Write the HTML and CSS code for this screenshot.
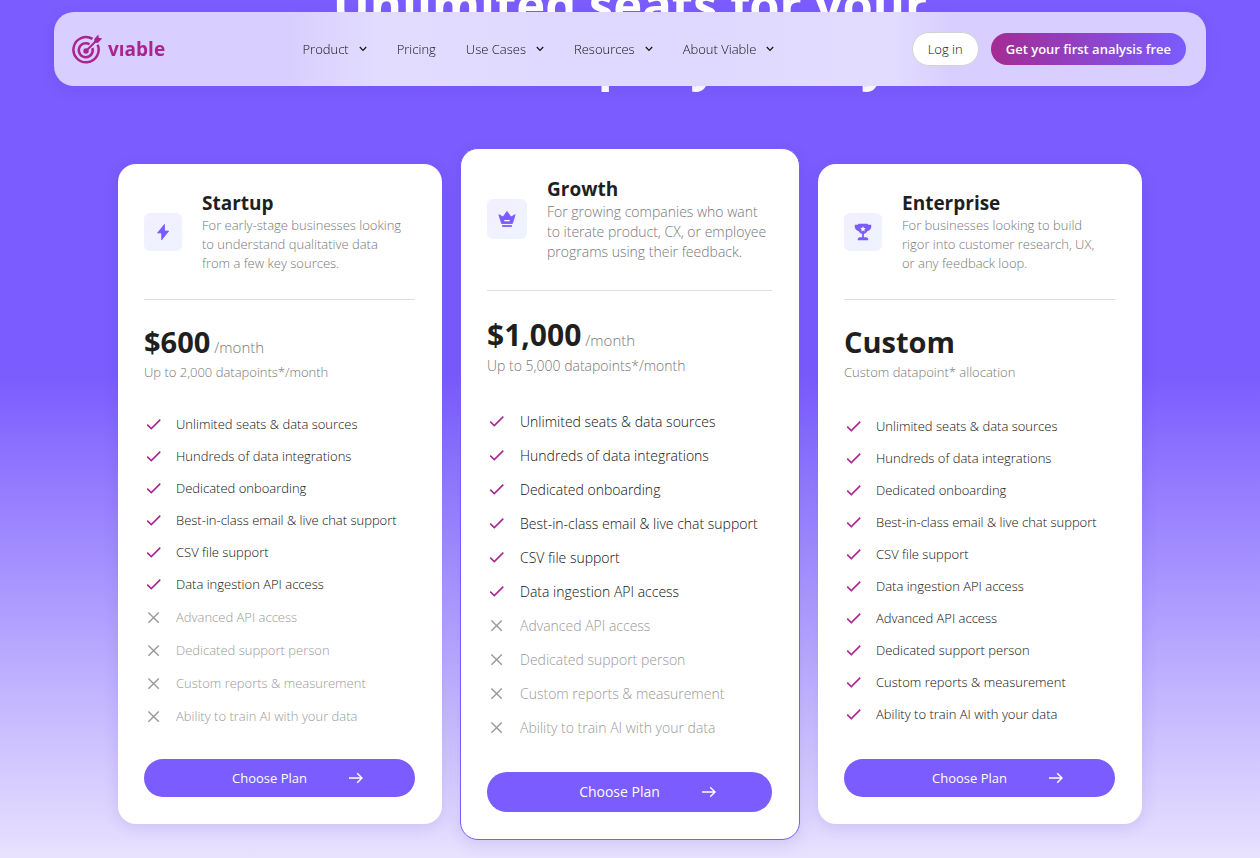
FILE: index.html
```
<!DOCTYPE html>
<html lang="en">

<head>
    <meta charset="UTF-8">
    <meta name="viewport" content="width=device-width, initial-scale=1.0">
    <title>Viable | Pricing</title>
    <link rel="stylesheet" href="styles.css">
</head>

<body>
    <!-- icons shared by the menu and the plans -->
    <svg class="sprite" width="0" height="0" aria-hidden="true">
        <symbol id="chevron" viewBox="0 0 8 6">
            <path d="M.8 1L4 4.400 7.200 1" fill="none" stroke="currentColor" stroke-width="1.2" />
        </symbol>
        <symbol id="check" viewBox="0 0 20 20">
            <path d="M3.2 10.600l4.100 4L16.300 5.600" fill="none" stroke="currentColor" stroke-width="1.5" />
        </symbol>
        <symbol id="cross" viewBox="0 0 20 20">
            <path d="M4.4 5.4l10.4 10.4M14.8 5.4L4.4 15.8" fill="none" stroke="currentColor" stroke-width="1.4" />
        </symbol>
        <symbol id="arrow" viewBox="0 0 14 12">
            <path d="M0 6h13M8.2 1.2L13 6l-4.8 4.8" fill="none" stroke="currentColor" stroke-width="1.4" />
        </symbol>
    </svg>

    <header class="navbar">
        <a class="logo" href="#">
            <svg width="31" height="31" viewBox="0 0 31 31" aria-hidden="true">
                <g fill="none" stroke="currentColor" stroke-width="2.5">
                    <path d="M20.5 4.9A12.6 12.6 0 1 0 25.6 10.7" />
                    <path d="M17.5 10.3A7 7 0 1 0 20.4 14" />
                    <path d="M14 17L24.5 6.5" stroke-width="2" />
                </g>
                <circle cx="14" cy="17" r="2.7" fill="currentColor" />
                <path d="M22.3 8.9V4.9L26.3.6l.5 3.2 3.4.7-4.1 4.2z" fill="currentColor" />
            </svg>
            <span>vıable</span>
        </a>
        <nav class="menu">
            <a href="#">Product <svg class="chevron"><use href="#chevron" /></svg></a>
            <a href="#">Pricing</a>
            <a href="#">Use Cases <svg class="chevron"><use href="#chevron" /></svg></a>
            <a href="#">Resources <svg class="chevron"><use href="#chevron" /></svg></a>
            <a href="#">About Viable <svg class="chevron"><use href="#chevron" /></svg></a>
        </nav>
        <div class="actions">
            <a class="login" href="#">Log in</a>
            <a class="cta" href="#">Get your first analysis free</a>
        </div>
    </header>

    <main class="pricing">
        <h1 class="headline">Unlimited seats for your<br>entire company, always.</h1>

        <div class="plans">
            <section class="plan">
                <div class="plan-head">
                    <div class="plan-icon">
                        <svg viewBox="0 0 20 20" aria-hidden="true">
                            <path d="M11.6 1.6L4 11h4.6v7.6L16.2 9h-4.6z" fill="currentColor" stroke="currentColor" stroke-linejoin="round" />
                        </svg>
                    </div>
                    <div>
                        <h2>Startup</h2>
                        <p>For early-stage businesses looking to understand qualitative data from a few key sources.</p>
                    </div>
                </div>
                <div class="price"><strong>$600</strong> /month</div>
                <p class="volume">Up to 2,000 datapoints*/month</p>
                <ul class="features">
                    <li><svg><use href="#check" /></svg>Unlimited seats &amp; data sources</li>
                    <li><svg><use href="#check" /></svg>Hundreds of data integrations</li>
                    <li><svg><use href="#check" /></svg>Dedicated onboarding</li>
                    <li><svg><use href="#check" /></svg>Best-in-class email &amp; live chat support</li>
                    <li><svg><use href="#check" /></svg>CSV file support</li>
                    <li><svg><use href="#check" /></svg>Data ingestion API access</li>
                    <li class="off"><svg><use href="#cross" /></svg>Advanced API access</li>
                    <li class="off"><svg><use href="#cross" /></svg>Dedicated support person</li>
                    <li class="off"><svg><use href="#cross" /></svg>Custom reports &amp; measurement</li>
                    <li class="off"><svg><use href="#cross" /></svg>Ability to train AI with your data</li>
                </ul>
                <button class="choose" type="button">Choose Plan <svg><use href="#arrow" /></svg></button>
            </section>

            <section class="plan plan-main">
                <div class="plan-head">
                    <div class="plan-icon">
                        <svg viewBox="0 0 20 20" aria-hidden="true">
                            <path d="M1 5.2l4.6 2.6L10 1.6l4.4 6.2L19 5.2 16 15H4z" fill="currentColor" stroke="currentColor" stroke-linejoin="round" />
                            <path d="M7 11.8h6" stroke="#fff" stroke-width="1.4" />
                            <path d="M4.6 17.8h10.8" stroke="currentColor" stroke-width="2" />
                        </svg>
                    </div>
                    <div>
                        <h2>Growth</h2>
                        <p>For growing companies who want to iterate product, CX, or employee programs using their feedback.</p>
                    </div>
                </div>
                <div class="price"><strong>$1,000</strong> /month</div>
                <p class="volume">Up to 5,000 datapoints*/month</p>
                <ul class="features">
                    <li><svg><use href="#check" /></svg>Unlimited seats &amp; data sources</li>
                    <li><svg><use href="#check" /></svg>Hundreds of data integrations</li>
                    <li><svg><use href="#check" /></svg>Dedicated onboarding</li>
                    <li><svg><use href="#check" /></svg>Best-in-class email &amp; live chat support</li>
                    <li><svg><use href="#check" /></svg>CSV file support</li>
                    <li><svg><use href="#check" /></svg>Data ingestion API access</li>
                    <li class="off"><svg><use href="#cross" /></svg>Advanced API access</li>
                    <li class="off"><svg><use href="#cross" /></svg>Dedicated support person</li>
                    <li class="off"><svg><use href="#cross" /></svg>Custom reports &amp; measurement</li>
                    <li class="off"><svg><use href="#cross" /></svg>Ability to train AI with your data</li>
                </ul>
                <button class="choose" type="button">Choose Plan <svg><use href="#arrow" /></svg></button>
            </section>

            <section class="plan">
                <div class="plan-head">
                    <div class="plan-icon">
                        <svg viewBox="0 0 20 20" aria-hidden="true">
                            <path d="M5 .8h10l.8 1.200h3.200c.8 3.600-1 6.200-4.200 7.200-1 1.600-2.200 2.600-3.800 3v3.600h2.600c1 .2 1.800.8 2.200 1.800v1.600H4.200v-1.600c.4-1 1.200-1.600 2.200-1.800H9v-3.600c-1.600-.4-2.800-1.400-3.800-3C2 8.200.2 5.600 1 2h3.200z" fill="currentColor" />
                            <path d="M10 3.600l.9 1.900 2.100.3-1.500 1.500.3 2.100-1.800-1-1.800 1 .3-2.100L7 5.800l2.100-.3z" fill="#fff" />
                        </svg>
                    </div>
                    <div>
                        <h2>Enterprise</h2>
                        <p>For businesses looking to build rigor into customer research, UX, or any feedback loop.</p>
                    </div>
                </div>
                <div class="price"><strong>Custom</strong></div>
                <p class="volume">Custom datapoint* allocation</p>
                <ul class="features">
                    <li><svg><use href="#check" /></svg>Unlimited seats &amp; data sources</li>
                    <li><svg><use href="#check" /></svg>Hundreds of data integrations</li>
                    <li><svg><use href="#check" /></svg>Dedicated onboarding</li>
                    <li><svg><use href="#check" /></svg>Best-in-class email &amp; live chat support</li>
                    <li><svg><use href="#check" /></svg>CSV file support</li>
                    <li><svg><use href="#check" /></svg>Data ingestion API access</li>
                    <li><svg><use href="#check" /></svg>Advanced API access</li>
                    <li><svg><use href="#check" /></svg>Dedicated support person</li>
                    <li><svg><use href="#check" /></svg>Custom reports &amp; measurement</li>
                    <li><svg><use href="#check" /></svg>Ability to train AI with your data</li>
                </ul>
                <button class="choose" type="button">Choose Plan <svg><use href="#arrow" /></svg></button>
            </section>
        </div>
    </main>
</body>

</html>
```
FILE: styles.css
```
:root {
    --purple: #7a5cff;
    --magenta: #a9248f;
    --ink: #1f1f1f;
    --grey: #777;
}

* {
    box-sizing: border-box;
}

body {
    margin: 0;
    font-family: "Open Sans", sans-serif;
    font-size: 13px;
    font-weight: 300;
    color: #111;
}

h1,
h2,
p,
ul {
    margin: 0;
    padding: 0;
}

a {
    color: inherit;
    text-decoration: none;
}

.sprite {
    position: absolute;
}

/* navbar */
.navbar {
    position: fixed;
    z-index: 10;
    top: 12px;
    left: 54px;
    right: 54px;
    max-width: 1152px;
    height: 74px;
    margin: 0 auto;
    padding: 0 20px 0 18px;
    display: flex;
    justify-content: space-between;
    align-items: center;
    border-radius: 20px;
    background: linear-gradient(90deg, #d8ceff 20%, #e2dcff 28%, #dfd8ff 50%, #e2dcff 73%, #d8ceff 78%);
    box-shadow: 0 4px 16px rgba(60, 40, 160, .08);
}

.logo {
    display: flex;
    align-items: center;
    gap: 5px;
    color: var(--magenta);
    font-size: 19px;
    font-weight: 700;
    line-height: 24px;
}

.menu {
    display: flex;
    gap: 30px;
    line-height: 20px;
}

.menu a {
    display: flex;
    align-items: center;
    gap: 10px;
}

.chevron {
    width: 8px;
    height: 6px;
}

.actions {
    display: flex;
    align-items: center;
    gap: 12px;
}

.login,
.cta {
    border-radius: 20px;
    line-height: 32px;
    padding: 0 15px;
}

.login {
    background: #fff;
    border: 1px solid #d2d2d2;
}

.cta {
    color: #fff;
    font-weight: 600;
    background: linear-gradient(90deg, #a42b93, var(--purple));
}

/* pricing */
.pricing {
    min-height: 858px;
    padding-bottom: 18px;
    overflow: hidden;
    background: linear-gradient(var(--purple) 375px, #e8e2ff);
}

.headline {
    margin-top: -24px;
    color: #fff;
    font-size: 49px;
    font-weight: 700;
    line-height: 57px;
    text-align: center;
}

.plans {
    max-width: 1024px;
    margin: 58px auto 0;
    display: grid;
    grid-template-columns: 1fr 340px 1fr;
    gap: 18px;
    align-items: center;
}

.plan {
    min-height: 660px;
    padding: 26px 27px 27px 26px;
    display: flex;
    flex-direction: column;
    border-radius: 18px;
    background: #fff;
    box-shadow: 0 4px 16px rgba(60, 40, 160, .12);
}

.plan-head {
    display: flex;
    align-items: center;
    gap: 20px;
    padding-bottom: 26px;
    border-bottom: 1px solid #ddd;
    color: var(--grey);
    line-height: 19px;
}

.plan-head p {
    max-width: 205px;
}

.plan-icon {
    flex: none;
    width: 38px;
    height: 38px;
    display: flex;
    justify-content: center;
    align-items: center;
    border-radius: 6px;
    background: linear-gradient(135deg, #f3efff, #eef3ff);
    color: var(--purple);
}

.plan-icon svg {
    width: 18px;
    height: 18px;
}

.plan h2 {
    color: var(--ink);
    font-size: 19px;
    font-weight: 700;
    line-height: 26px;
}

.price {
    margin-top: 26px;
    color: var(--grey);
    font-size: 15px;
    line-height: 32px;
}

.price strong {
    color: var(--ink);
    font-size: 29px;
    font-weight: 700;
}

.volume {
    color: var(--grey);
    line-height: 18px;
}

.features {
    flex: 1;
    display: flex;
    flex-direction: column;
    justify-content: center;
    list-style: none;
}

.features li {
    display: flex;
    align-items: center;
    gap: 12px;
    height: 32px;
}

.features li.off {
    height: 33px;
    color: #999;
}

.features svg {
    width: 20px;
    height: 20px;
    color: var(--magenta);
}

.features .off svg {
    color: #999;
}

.choose {
    display: flex;
    justify-content: center;
    align-items: center;
    gap: 42px;
    height: 38px;
    padding: 0 0 0 36px;
    border: 0;
    border-radius: 20px;
    background: var(--purple);
    color: #fff;
    font: 500 13px/20px "Open Sans", sans-serif;
}

.choose svg {
    width: 14px;
    height: 12px;
}

/* highlighted plan */
.plan-main {
    min-height: 692px;
    padding-top: 27px;
    border: 1px solid var(--purple);
    font-size: 14px;
}

.plan-main .plan-head {
    padding-bottom: 28px;
    line-height: 20px;
}

.plan-main .plan-head p {
    max-width: none;
}

.plan-main .plan-icon {
    width: 40px;
    height: 40px;
}

.plan-main .price {
    margin-top: 28px;
}

.plan-main .price strong {
    font-size: 30px;
}

.plan-main .volume {
    line-height: 20px;
}

.plan-main .features li {
    gap: 13px;
    height: 34px;
}

.plan-main .choose {
    height: 40px;
    font-size: 14px;
}
```
